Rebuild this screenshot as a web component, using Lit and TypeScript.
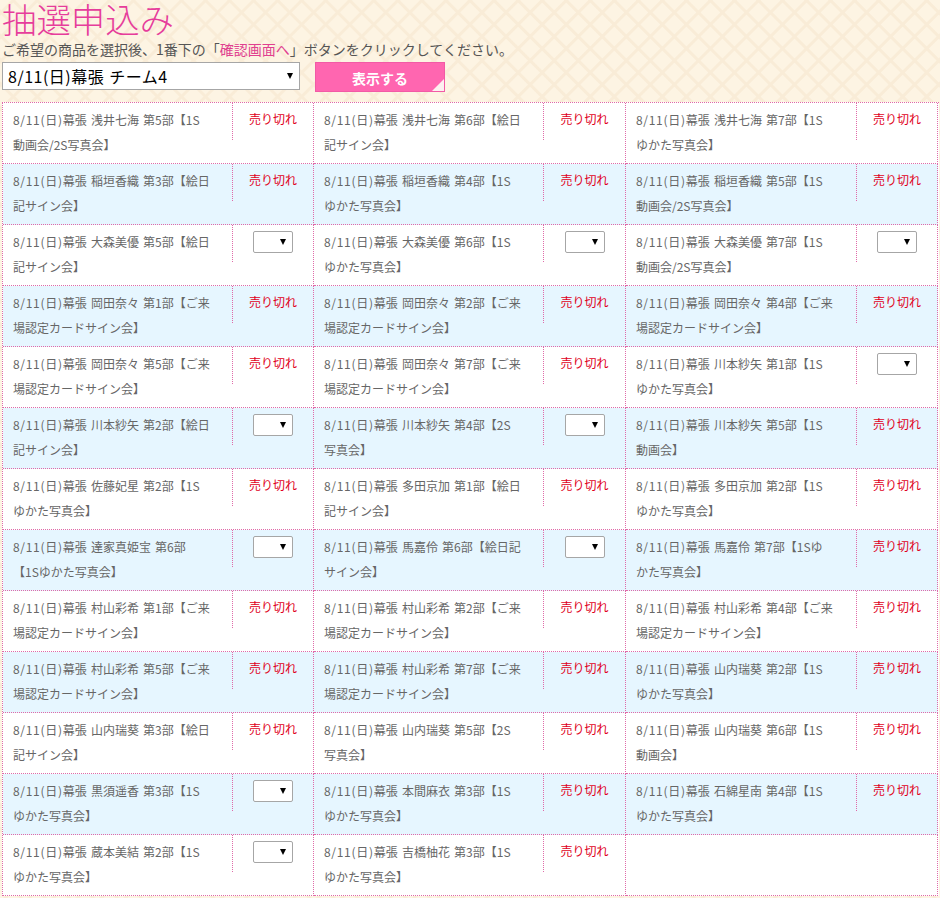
import { LitElement, html, css } from 'lit'
import { customElement } from 'lit/decorators.js'

type Item = { text: string; open?: boolean }

const items: Item[] = [
  { text: '浅井七海 第5部【1S動画会/2S写真会】' },
  { text: '浅井七海 第6部【絵日記サイン会】' },
  { text: '浅井七海 第7部【1Sゆかた写真会】' },
  { text: '稲垣香織 第3部【絵日記サイン会】' },
  { text: '稲垣香織 第4部【1Sゆかた写真会】' },
  { text: '稲垣香織 第5部【1S動画会/2S写真会】' },
  { text: '大森美優 第5部【絵日記サイン会】', open: true },
  { text: '大森美優 第6部【1Sゆかた写真会】', open: true },
  { text: '大森美優 第7部【1S動画会/2S写真会】', open: true },
  { text: '岡田奈々 第1部【ご来場認定カードサイン会】' },
  { text: '岡田奈々 第2部【ご来場認定カードサイン会】' },
  { text: '岡田奈々 第4部【ご来場認定カードサイン会】' },
  { text: '岡田奈々 第5部【ご来場認定カードサイン会】' },
  { text: '岡田奈々 第7部【ご来場認定カードサイン会】' },
  { text: '川本紗矢 第1部【1Sゆかた写真会】', open: true },
  { text: '川本紗矢 第2部【絵日記サイン会】', open: true },
  { text: '川本紗矢 第4部【2S写真会】', open: true },
  { text: '川本紗矢 第5部【1S動画会】' },
  { text: '佐藤妃星 第2部【1Sゆかた写真会】' },
  { text: '多田京加 第1部【絵日記サイン会】' },
  { text: '多田京加 第2部【1Sゆかた写真会】' },
  { text: '達家真姫宝 第6部【1Sゆかた写真会】', open: true },
  { text: '馬嘉伶 第6部【絵日記サイン会】', open: true },
  { text: '馬嘉伶 第7部【1Sゆかた写真会】' },
  { text: '村山彩希 第1部【ご来場認定カードサイン会】' },
  { text: '村山彩希 第2部【ご来場認定カードサイン会】' },
  { text: '村山彩希 第4部【ご来場認定カードサイン会】' },
  { text: '村山彩希 第5部【ご来場認定カードサイン会】' },
  { text: '村山彩希 第7部【ご来場認定カードサイン会】' },
  { text: '山内瑞葵 第2部【1Sゆかた写真会】' },
  { text: '山内瑞葵 第3部【絵日記サイン会】' },
  { text: '山内瑞葵 第5部【2S写真会】' },
  { text: '山内瑞葵 第6部【1S動画会】' },
  { text: '黒須遥香 第3部【1Sゆかた写真会】', open: true },
  { text: '本間麻衣 第3部【1Sゆかた写真会】' },
  { text: '石綿星南 第4部【1Sゆかた写真会】' },
  { text: '蔵本美結 第2部【1Sゆかた写真会】', open: true },
  { text: '吉橋柚花 第3部【1Sゆかた写真会】' },
]

@customElement('app-root')
export class AppRoot extends LitElement {
  static styles = css`
    :host {
      display: block;
      height: 898px;
      overflow: hidden;
      font-family: "Noto Sans CJK JP", "Noto Sans", sans-serif;
      color: #666;
      background-color: #fdf4e3;
      background-image:
        repeating-linear-gradient(45deg, transparent 0 13px, #f9ecd7 14px 16px, transparent 17px),
        repeating-linear-gradient(-45deg, transparent 0 13px, #f9ecd7 14px 16px, transparent 17px);
    }
    h1 {
      margin: 0;
      padding-left: 2px;
      height: 41px;
      font-size: 34.4px;
      line-height: 37px;
      font-weight: 300;
      color: #e63d9b;
    }
    .lead {
      margin: 0;
      padding-left: 2px;
      height: 21px;
      font-size: 14px;
      line-height: 17px;
      color: #555;
    }
    .lead span { color: #e0408f; }
    .controls {
      display: flex;
      align-items: flex-start;
      gap: 15px;
      padding-left: 2px;
      height: 40px;
    }
    .sel { position: relative; display: block; }
    .sel select {
      display: block;
      appearance: none;
      box-sizing: border-box;
      margin: 0;
      background: #fff;
      border: 1px solid #a6a6a6;
      border-radius: 0;
      font-family: inherit;
      color: #000;
      outline: none;
    }
    .sel::after {
      content: "";
      position: absolute;
      top: 50%;
      margin-top: -3px;
      right: 7px;
      border-style: solid;
      border-width: 6px 3.5px 0;
      border-color: #000 transparent transparent;
      pointer-events: none;
    }
    .main select {
      width: 298px;
      height: 28px;
      padding: 0 5px;
      font-size: 16px;
      letter-spacing: 0.5px;
      word-spacing: 1px;
    }
    .show {
      position: relative;
      box-sizing: border-box;
      width: 130px;
      height: 30px;
      border: 1px solid #f25aa6;
      padding: 1px 0 0;
      background: #ff66b0;
      color: #fff;
      font-family: inherit;
      font-size: 14px;
      font-weight: 700;
    }
    .show::after {
      content: "";
      position: absolute;
      right: 0;
      bottom: 0;
      border-style: solid;
      border-width: 0 0 12px 12px;
      border-color: transparent transparent #fdf0f0;
    }
    .grid {
      display: grid;
      grid-template-columns: 311px 312px 312px;
      grid-auto-rows: 61px;
      margin-left: 2px;
      width: 936px;
      background: #fff;
      border-top: 1px dotted #e06aa8;
      border-left: 1px dotted #e06aa8;
    }
    .cell {
      display: flex;
      align-items: flex-start;
      box-sizing: border-box;
      border-right: 1px dotted #e06aa8;
      border-bottom: 1px dotted #e06aa8;
      background: #fff;
    }
    .cell.alt { background: #e6f6ff; }
    .name {
      box-sizing: border-box;
      width: 229px;
      flex: none;
      padding: 4px 21.5px 0 10px;
      font-size: 12px;
      line-height: 25px;
      word-spacing: 1.5px;
    }
    .cell:nth-child(3n) .name {
      width: 230px;
      padding-right: 22.5px;
    }
    .date { letter-spacing: 0.7px; }
    .state {
      box-sizing: border-box;
      flex: 1;
      height: 37px;
      border-left: 1px dotted #e06aa8;
      display: flex;
      align-items: flex-start;
      justify-content: center;
      padding-top: 6px;
      font-size: 12px;
      line-height: 20px;
      color: #e0001b;
    }
    .state select {
      width: 40px;
      height: 22px;
      border-radius: 2px;
    }
  `

  render() {
    return html`
      <h1>抽選申込み</h1>
      <p class="lead">ご希望の商品を選択後、1番下の「<span>確認画面へ</span>」ボタンをクリックしてください。</p>
      <div class="controls">
        <label class="sel main"><select><option>8/11(日)幕張 チーム4</option></select></label>
        <button class="show">表示する</button>
      </div>
      <div class="grid">
        ${items.map((item, i) => html`
          <div class="cell ${Math.floor(i / 3) % 2 ? 'alt' : ''}">
            <div class="name"><span class="date">8/11(日)</span>幕張 ${item.text}</div>
            <div class="state">
              ${item.open
                ? html`<label class="sel"><select><option></option></select></label>`
                : '売り切れ'}
            </div>
          </div>
        `)}
        <div class="cell"></div>
      </div>
    `
  }
}
